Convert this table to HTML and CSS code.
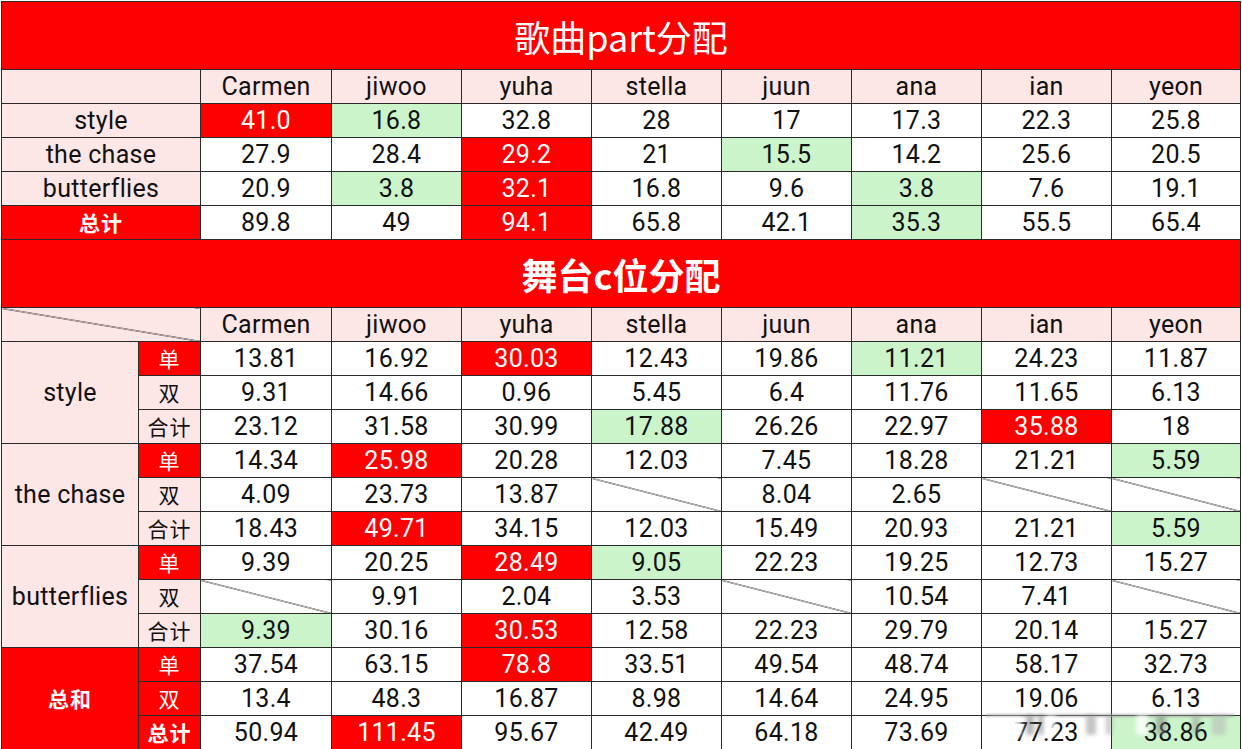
FILE: index.html
```html
<!DOCTYPE html>
<html lang="zh">
<head>
<meta charset="utf-8">
<link rel="stylesheet" href="styles.css">
</head>
<body>
<div class="sheet">
<table class="grid">
  <colgroup>
    <col class="c-a"><col class="c-b">
    <col class="c-1"><col class="c-n"><col class="c-n"><col class="c-n"><col class="c-n"><col class="c-n"><col class="c-n"><col class="c-last">
  </colgroup>
  <tbody>
    <tr class="title-row"><td colspan="10" class="title">歌曲part分配</td></tr>
    <tr class="row"><td colspan="2" class="pink"></td><td class="pink">Carmen</td><td class="pink">jiwoo</td><td class="pink">yuha</td><td class="pink">stella</td><td class="pink">juun</td><td class="pink">ana</td><td class="pink">ian</td><td class="pink">yeon</td></tr>
    <tr class="row"><td colspan="2" class="pink">style</td><td class="red">41.0</td><td class="green">16.8</td><td>32.8</td><td>28</td><td>17</td><td>17.3</td><td>22.3</td><td>25.8</td></tr>
    <tr class="row"><td colspan="2" class="pink">the chase</td><td>27.9</td><td>28.4</td><td class="red">29.2</td><td>21</td><td class="green">15.5</td><td>14.2</td><td>25.6</td><td>20.5</td></tr>
    <tr class="row"><td colspan="2" class="pink">butterflies</td><td>20.9</td><td class="green">3.8</td><td class="red">32.1</td><td>16.8</td><td>9.6</td><td class="green">3.8</td><td>7.6</td><td>19.1</td></tr>
    <tr class="row"><td colspan="2" class="red cjk strong">总计</td><td>89.8</td><td>49</td><td class="red">94.1</td><td>65.8</td><td>42.1</td><td class="green">35.3</td><td>55.5</td><td>65.4</td></tr>

    <tr class="title-row"><td colspan="10" class="title bold">舞台c位分配</td></tr>
    <tr class="row"><td colspan="2" class="pink diag"></td><td class="pink">Carmen</td><td class="pink">jiwoo</td><td class="pink">yuha</td><td class="pink">stella</td><td class="pink">juun</td><td class="pink">ana</td><td class="pink">ian</td><td class="pink">yeon</td></tr>

    <tr class="row"><td rowspan="3" class="pink">style</td><td class="red cjk">单</td><td>13.81</td><td>16.92</td><td class="red">30.03</td><td>12.43</td><td>19.86</td><td class="green">11.21</td><td>24.23</td><td>11.87</td></tr>
    <tr class="row"><td class="pink cjk">双</td><td>9.31</td><td>14.66</td><td>0.96</td><td>5.45</td><td>6.4</td><td>11.76</td><td>11.65</td><td>6.13</td></tr>
    <tr class="row"><td class="pink cjk">合计</td><td>23.12</td><td>31.58</td><td>30.99</td><td class="green">17.88</td><td>26.26</td><td>22.97</td><td class="red">35.88</td><td>18</td></tr>

    <tr class="row"><td rowspan="3" class="pink">the chase</td><td class="red cjk">单</td><td>14.34</td><td class="red">25.98</td><td>20.28</td><td>12.03</td><td>7.45</td><td>18.28</td><td>21.21</td><td class="green">5.59</td></tr>
    <tr class="row"><td class="pink cjk">双</td><td>4.09</td><td>23.73</td><td>13.87</td><td class="diag"></td><td>8.04</td><td>2.65</td><td class="diag"></td><td class="diag"></td></tr>
    <tr class="row"><td class="pink cjk">合计</td><td>18.43</td><td class="red">49.71</td><td>34.15</td><td>12.03</td><td>15.49</td><td>20.93</td><td>21.21</td><td class="green">5.59</td></tr>

    <tr class="row"><td rowspan="3" class="pink">butterflies</td><td class="red cjk">单</td><td>9.39</td><td>20.25</td><td class="red">28.49</td><td class="green">9.05</td><td>22.23</td><td>19.25</td><td>12.73</td><td>15.27</td></tr>
    <tr class="row"><td class="pink cjk">双</td><td class="diag"></td><td>9.91</td><td>2.04</td><td>3.53</td><td class="diag"></td><td>10.54</td><td>7.41</td><td class="diag"></td></tr>
    <tr class="row"><td class="pink cjk">合计</td><td class="green">9.39</td><td>30.16</td><td class="red">30.53</td><td>12.58</td><td>22.23</td><td>29.79</td><td>20.14</td><td>15.27</td></tr>

    <tr class="row"><td rowspan="3" class="red cjk strong">总和</td><td class="red cjk">单</td><td>37.54</td><td>63.15</td><td class="red">78.8</td><td>33.51</td><td>49.54</td><td>48.74</td><td>58.17</td><td>32.73</td></tr>
    <tr class="row"><td class="red cjk">双</td><td>13.4</td><td>48.3</td><td>16.87</td><td>8.98</td><td>14.64</td><td>24.95</td><td>19.06</td><td>6.13</td></tr>
    <tr class="row"><td class="red cjk strong">总计</td><td>50.94</td><td class="red">111.45</td><td>95.67</td><td>42.49</td><td>64.18</td><td>73.69</td><td>77.23</td><td class="green">38.86</td></tr>
  </tbody>
</table>
<div class="watermark">
  <span class="wm-line"></span>
  <span class="wm b1"></span><span class="wm b2"></span><span class="wm b3"></span><span class="wm b4"></span><span class="wm b5"></span><span class="wm b6"></span><span class="wm b7"></span><span class="wm b8"></span><span class="wm b9"></span><span class="wm b10"></span>
</div>
</div>
</body>
</html>
```
FILE: styles.css
```css
html, body {
  margin: 0;
  padding: 0;
  background: #ffffff;
}
.sheet {
  position: relative;
  width: 1242px;
  height: 749px;
  padding: 1px 0 0 1px;
  box-sizing: border-box;
  overflow: hidden;
}
.grid {
  border-collapse: collapse;
  table-layout: fixed;
  width: 1239px;
  font-family: Roboto, "Noto Sans CJK SC", sans-serif;
  font-size: 25px;
  color: #111;
}
.c-a { width: 137px; }
.c-b { width: 62px; }
.c-1 { width: 131px; }
.c-n { width: 130px; }
.c-last { width: 129px; }
.grid td {
  border: 1px solid #2a2a2a;
  padding: 0;
  text-align: center;
  vertical-align: middle;
  line-height: 1;
  white-space: nowrap;
  letter-spacing: 0.3px;
  background: #ffffff;
}
.row td { height: 33px; }
.title-row td { height: 67px; }
.grid td.title {
  background: #fe0000;
  color: #ffffff;
  font-family: "Noto Sans CJK SC", sans-serif;
  font-size: 36px;
  font-weight: 400;
  letter-spacing: 0;
}
.grid td.title.bold { font-weight: 700; }
.grid td.pink { background: #fde6e6; }
.grid td.red { background: #fe0000; color: #ffffff; }
.grid td.green { background: #cbf4cb; }
.grid td.cjk {
  font-family: "Noto Sans CJK SC", sans-serif;
  font-size: 21px;
  letter-spacing: 1px;
  font-weight: 400;
}
.grid td.cjk.strong { font-weight: 700; }
.grid td.diag {
  background-image: linear-gradient(to top right, transparent calc(50% - 0.7px), #111 50%, transparent calc(50% + 0.7px));
}
.watermark {
  position: absolute;
  left: 986px;
  top: 712px;
  width: 248px;
  height: 28px;
}
.wm-line {
  position: absolute;
  left: 0;
  right: 0;
  top: 2px;
  height: 3px;
  background: rgba(150,150,150,0.6);
  filter: blur(1px);
}
.wm {
  position: absolute;
  top: 3px;
  height: 20px;
  background: rgba(255,255,255,0.85);
  filter: blur(2px);
  border-radius: 3px;
}
.b1 { left: 2px; width: 34px; height: 18px; top: 6px; }
.b2 { left: 40px; width: 8px; background: rgba(120,120,120,0.55); }
.b3 { left: 52px; width: 6px; background: rgba(120,120,120,0.5); }
.b4 { left: 60px; width: 10px; background: rgba(255,255,255,0.8); }
.b5 { left: 100px; width: 10px; background: rgba(140,140,140,0.5); }
.b6 { left: 120px; width: 6px; background: rgba(140,140,140,0.45); }
.b7 { left: 150px; width: 12px; background: rgba(255,255,255,0.8); }
.b8 { left: 170px; width: 10px; background: rgba(120,120,120,0.5); }
.b9 { left: 206px; width: 8px; background: rgba(140,140,140,0.45); }
.b10 { left: 226px; width: 14px; background: rgba(180,180,180,0.5); }
```
